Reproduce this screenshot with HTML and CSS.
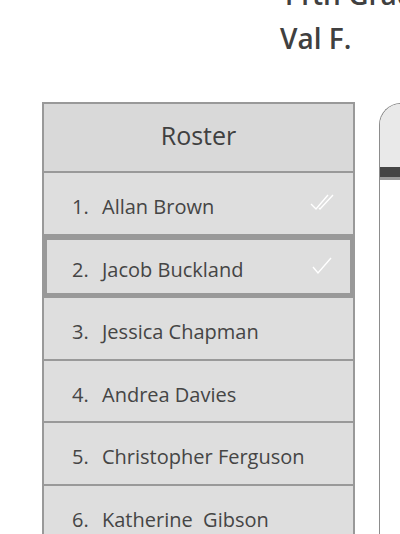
FILE: index.html
```html
<!DOCTYPE html>
<html>
<head>
<meta charset="utf-8">
<link rel="stylesheet" href="styles.css">
</head>
<body>
<div class="page">
  <div class="title">11th Grade<br>Val F.</div>
  <div class="main">
    <div class="roster">
      <div class="roster-head">Roster</div>
      <div class="row"><span class="num">1.</span><span class="name">Allan Brown</span>
        <svg class="check" width="26" height="18" viewBox="0 0 26 18"><path d="M1 11 L6 16 L18 2 M9 15 L10 16 L23 2" fill="none" stroke="#fff" stroke-width="1.4"/></svg>
      </div>
      <div class="row selected"><span class="num">2.</span><span class="name">Jacob Buckland</span>
        <svg class="check" width="26" height="18" viewBox="0 0 26 18"><path d="M3 10 L8 16 L21 1" fill="none" stroke="#fff" stroke-width="1.4"/></svg>
      </div>
      <div class="row"><span class="num">3.</span><span class="name">Jessica Chapman</span></div>
      <div class="row"><span class="num">4.</span><span class="name">Andrea Davies</span></div>
      <div class="row"><span class="num">5.</span><span class="name">Christopher Ferguson</span></div>
      <div class="row"><span class="num">6.</span><span class="name">Katherine&nbsp; Gibson</span></div>
    </div>
    <div class="panel">
      <div class="panel-top"></div>
      <div class="panel-bar"></div>
      <div class="panel-body"></div>
    </div>
  </div>
</div>
</body>
</html>
```

FILE: styles.css
```css
html, body {
  margin: 0;
  padding: 0;
  background: #fff;
  overflow: hidden;
  height: 534px;
}
.page {
  font-family: "Open Sans", "DejaVu Sans", sans-serif;
  color: #454545;
}
.title {
  margin-top: -28px;
  margin-left: 280px;
  font-size: 28px;
  font-weight: 600;
  line-height: 44px;
  white-space: nowrap;
  color: #404040;
}
.main {
  display: flex;
  align-items: flex-start;
  margin-top: 42px;
  gap: 24px;
}
.roster {
  margin-left: 42px;
  width: 313px;
  box-sizing: border-box;
  border: 2px solid #999;
  border-bottom: none;
  background: #dedede;
  flex: none;
}
.roster-head {
  height: 67px;
  background: #d9d9d9;
  display: flex;
  align-items: center;
  justify-content: center;
  font-size: 25px;
  color: #404040;
  padding-bottom: 5px;
  box-sizing: border-box;
}
.row {
  position: relative;
  height: 62.6px;
  box-sizing: border-box;
  border-top: 2px solid #999;
  display: flex;
  align-items: center;
  padding: 6px 0 0 28px;
  font-size: 20px;
}
.row.selected {
  box-shadow: inset 0 0 0 3px #999;
  border-top-color: #999;
  border-top-width: 3px;
}
.num {
  width: 30px;
  flex: none;
}
.check {
  position: absolute;
  right: 17px;
  top: 20px;
}
.panel {
  flex: 1;
  margin-right: -40px;
  margin-top: 1px;
  height: 500px;
  border: 1px solid #8c8c8c;
  border-right: none;
  border-top-left-radius: 22px;
  overflow: hidden;
  box-sizing: border-box;
}
.panel-top {
  height: 63px;
  background: #e9e9e9;
}
.panel-bar {
  height: 10px;
  background: #454545;
  border-bottom: 3px solid #9a9a9a;
}
.panel-body {
  background: #fff;
}
```
